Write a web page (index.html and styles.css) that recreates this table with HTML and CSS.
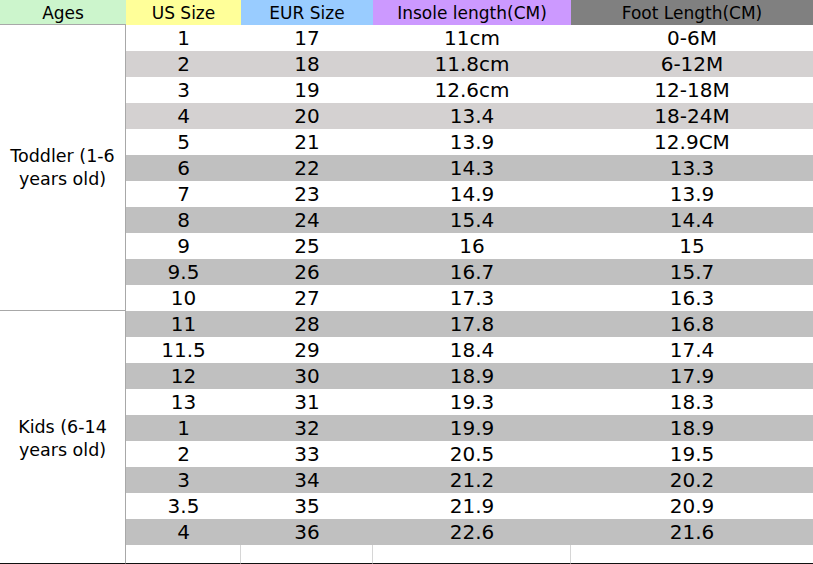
FILE: index.html
```html
<!DOCTYPE html>
<html>
<head>
<meta charset="utf-8">
<link rel="stylesheet" href="styles.css">
</head>
<body>
<table class="chart">
  <colgroup>
    <col class="c-age"><col class="c-us"><col class="c-eur"><col class="c-ins"><col class="c-foot">
  </colgroup>
  <thead>
    <tr class="head">
      <th class="h-age">Ages</th>
      <th class="h-us">US Size</th>
      <th class="h-eur">EUR Size</th>
      <th class="h-ins">Insole length(CM)</th>
      <th class="h-foot">Foot Length(CM)</th>
    </tr>
  </thead>
  <tbody>
    <tr><td class="age age-top" rowspan="11">Toddler (1-6<br>years old)</td><td>1</td><td>17</td><td>11cm</td><td>0-6M</td></tr>
    <tr class="lt"><td>2</td><td>18</td><td>11.8cm</td><td>6-12M</td></tr>
    <tr><td>3</td><td>19</td><td>12.6cm</td><td>12-18M</td></tr>
    <tr class="lt"><td>4</td><td>20</td><td>13.4</td><td>18-24M</td></tr>
    <tr><td>5</td><td>21</td><td>13.9</td><td>12.9CM</td></tr>
    <tr class="dk"><td>6</td><td>22</td><td>14.3</td><td>13.3</td></tr>
    <tr><td>7</td><td>23</td><td>14.9</td><td>13.9</td></tr>
    <tr class="dk"><td>8</td><td>24</td><td>15.4</td><td>14.4</td></tr>
    <tr><td>9</td><td>25</td><td>16</td><td>15</td></tr>
    <tr class="dk"><td>9.5</td><td>26</td><td>16.7</td><td>15.7</td></tr>
    <tr><td>10</td><td>27</td><td>17.3</td><td>16.3</td></tr>
    <tr class="dk"><td class="age age-bot" rowspan="10">Kids (6-14<br>years old)</td><td>11</td><td>28</td><td>17.8</td><td>16.8</td></tr>
    <tr><td>11.5</td><td>29</td><td>18.4</td><td>17.4</td></tr>
    <tr class="dk"><td>12</td><td>30</td><td>18.9</td><td>17.9</td></tr>
    <tr><td>13</td><td>31</td><td>19.3</td><td>18.3</td></tr>
    <tr class="dk"><td>1</td><td>32</td><td>19.9</td><td>18.9</td></tr>
    <tr><td>2</td><td>33</td><td>20.5</td><td>19.5</td></tr>
    <tr class="dk"><td>3</td><td>34</td><td>21.2</td><td>20.2</td></tr>
    <tr><td>3.5</td><td>35</td><td>21.9</td><td>20.9</td></tr>
    <tr class="dk"><td>4</td><td>36</td><td>22.6</td><td>21.6</td></tr>
    <tr class="empty"><td class="vl"></td><td class="vl"></td><td class="vl"></td><td></td></tr>
  </tbody>
</table>
</body>
</html>
```

FILE: styles.css
```css
html, body {
  margin: 0;
  padding: 0;
  background: #ffffff;
}

.chart {
  width: 813px;
  table-layout: fixed;
  border-collapse: separate;
  border-spacing: 0;
  font-family: "DejaVu Sans", Verdana, sans-serif;
  color: #000;
}

.c-age { width: 126px; }
.c-us { width: 115px; }
.c-eur { width: 132px; }
.c-ins { width: 198px; }
.c-foot { width: 242px; }

.chart th,
.chart td {
  padding: 0;
  text-align: center;
  vertical-align: middle;
  white-space: nowrap;
}

.head th {
  height: 25px;
  box-sizing: border-box;
  font-weight: normal;
  font-size: 17px;
  line-height: 20px;
  padding-top: 1px;
}

.h-age { background: #ccf5cc; border-bottom: 1px solid #a8a8a8; }
.h-us { background: #ffff99; }
.h-eur { background: #99ccff; }
.h-ins { background: #cc99ff; }
.h-foot { background: #808080; }

.chart tbody tr {
  height: 26px;
}

.chart tbody td {
  font-size: 20px;
  line-height: 24px;
  height: 26px;
  box-sizing: border-box;
}

.chart tbody tr.lt td { background: #d4d1d1; }
.chart tbody tr.dk td { background: #c0c0c0; }

.chart tbody tr td.age {
  background: #ffffff;
  font-size: 17.5px;
  line-height: 23px;
  border-right: 1px solid #a8a8a8;
  white-space: normal;
}

.chart tbody tr td.age-top {
  border-bottom: 1px solid #a8a8a8;
}

.chart tbody tr td.age-bot {
  border-bottom: 1px solid #111;
  padding-top: 4px;
}

.chart tbody tr.empty {
  height: 19px;
}

.chart tbody tr.empty td {
  height: 19px;
  border-bottom: 1px solid #111;
}

.chart tbody tr.empty td.vl {
  border-right: 1px solid #d6d6d6;
}
```
